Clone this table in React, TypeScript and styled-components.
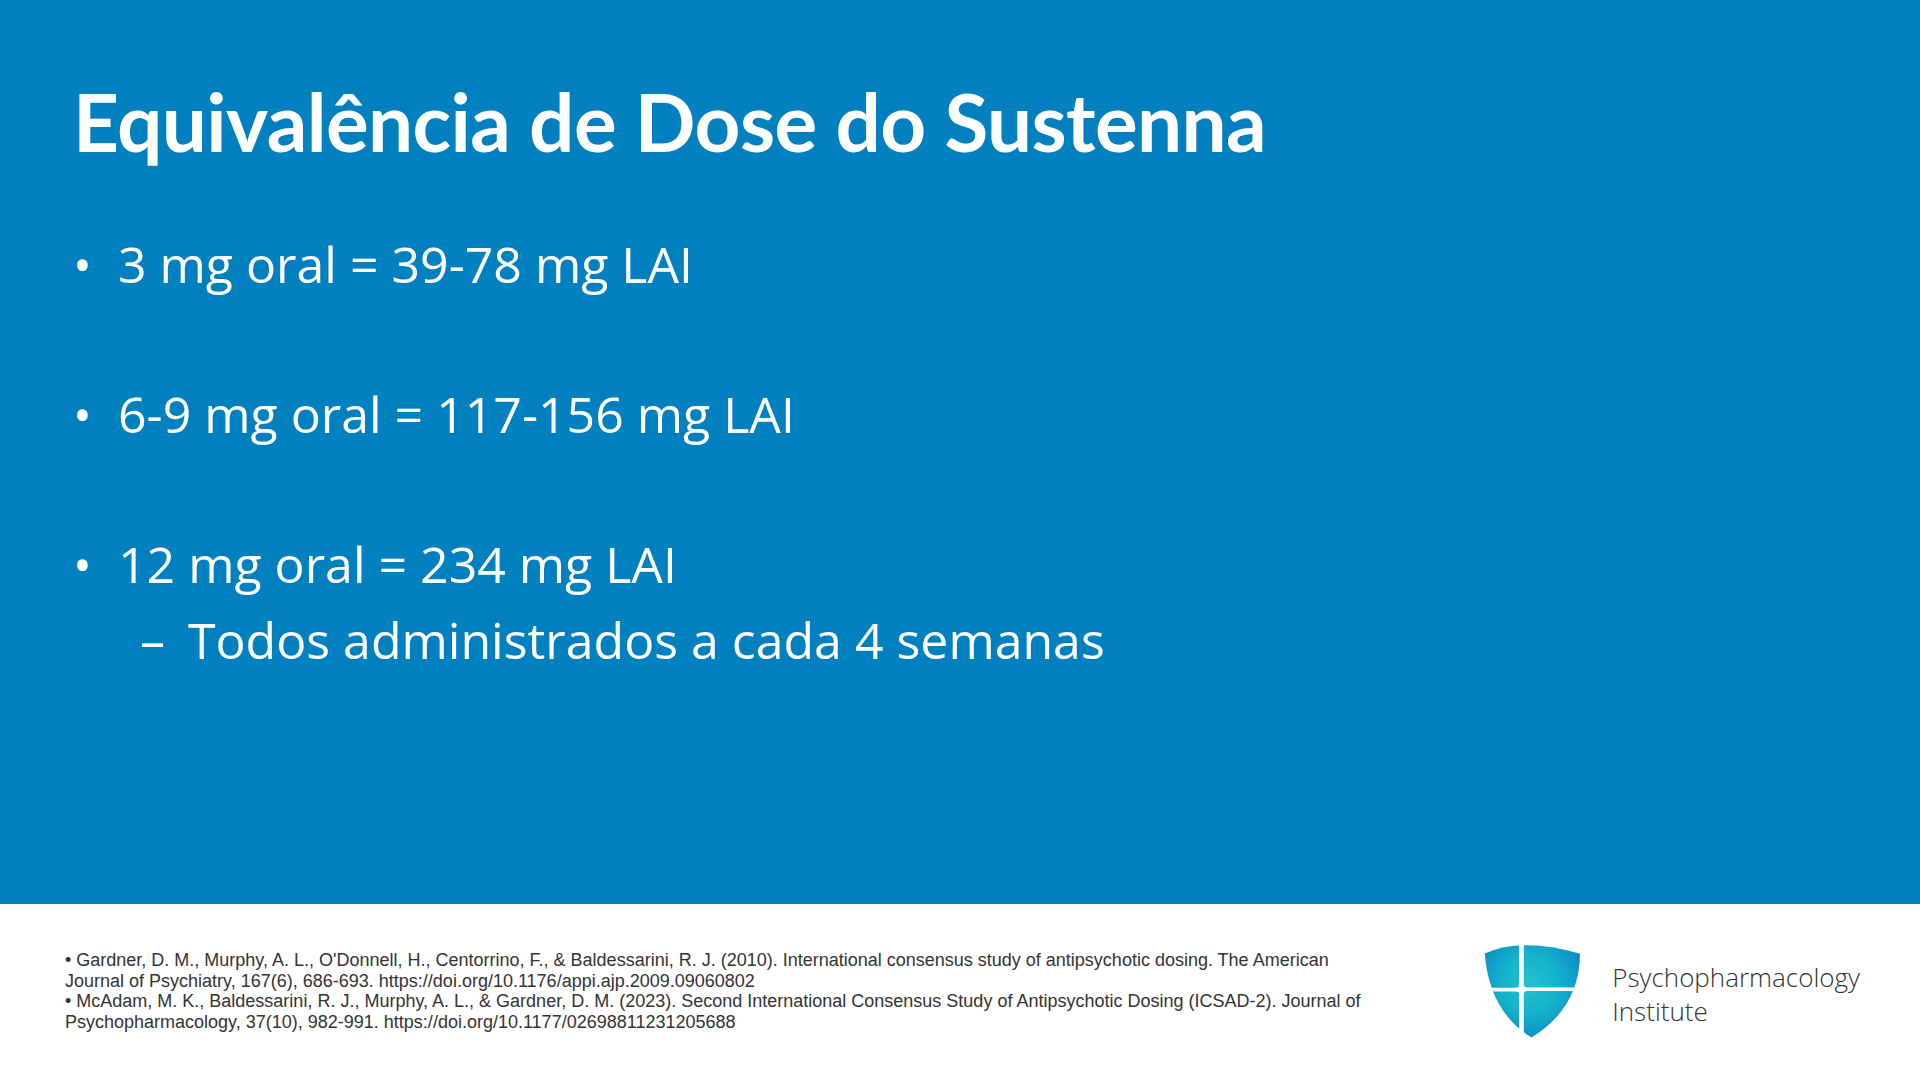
import React from "react";
import styled, { createGlobalStyle } from "styled-components";

const GlobalStyle = createGlobalStyle`
  html, body {
    margin: 0;
    padding: 0;
    background: #ffffff;
  }
  body {
    width: 1920px;
    height: 1080px;
    overflow: hidden;
  }
  * {
    box-sizing: border-box;
  }
`;

const Slide = styled.div`
  width: 1920px;
  height: 1080px;
  display: flex;
  flex-direction: column;
`;

const Main = styled.main`
  height: 904px;
  background: #0180c0;
  padding: 81px 0 0 73px;
  display: flex;
  flex-direction: column;
`;

const Title = styled.h1`
  margin: 0;
  font-family: Lato, "Open Sans", sans-serif;
  font-weight: 700;
  font-size: 80px;
  line-height: 80px;
  letter-spacing: -0.6px;
  color: #ffffff;
`;

const List = styled.ul`
  list-style: none;
  margin: 78px 0 0 0;
  padding: 0;
  display: flex;
  flex-direction: column;
  gap: 100px;
`;

const SubList = styled.ul`
  list-style: none;
  margin: 26px 0 0 0;
  padding: 0;
`;

const Item = styled.li`
  display: flex;
  flex-direction: column;
`;

const Row = styled.div<{ $indent?: number }>`
  display: flex;
  align-items: baseline;
  margin-left: ${(p) => p.$indent ?? 0}px;
  font-family: "Open Sans", sans-serif;
  font-size: 50px;
  line-height: 50px;
  color: #ffffff;
  white-space: nowrap;
`;

const Marker = styled.span<{ $width: number }>`
  flex: 0 0 ${(p) => p.$width}px;
`;

const Footer = styled.footer`
  flex: 1;
  background: #ffffff;
  display: flex;
  align-items: center;
  justify-content: space-between;
  padding: 0 60px 2px 65px;
`;

const Refs = styled.div`
  width: 1312px;
  font-family: "Liberation Sans", Arial, sans-serif;
  font-size: 18px;
  line-height: 20.5px;
  color: #333333;
`;

const RefLine = styled.p`
  margin: 0;
`;

const Logo = styled.div`
  display: flex;
  align-items: center;
  gap: 31px;
`;

const LogoText = styled.div`
  margin-top: 5px;
  font-family: "Open Sans", sans-serif;
  font-weight: 300;
  font-size: 26px;
  line-height: 34px;
  color: #333333;
`;

const LogoLine = styled.span`
  display: block;
`;

const Shield: React.FC = () => (
  <svg width="97" height="94" viewBox="10 6 97 94" aria-hidden="true">
    <defs>
      <radialGradient id="shieldGrad" gradientUnits="userSpaceOnUse" cx="56" cy="46" r="62">
        <stop offset="0" stopColor="#22c3cf" />
        <stop offset="0.45" stopColor="#16b3cd" />
        <stop offset="1" stopColor="#0a84c2" />
      </radialGradient>
      <clipPath id="shieldClip">
        <path d="M10.8,15.5 Q48,-1 106,15.8 C105.5,50 92,78 57.5,99.5 C26,80 13.5,50 10.8,15.5 Z" />
      </clipPath>
    </defs>
    <g clipPath="url(#shieldClip)" fill="url(#shieldGrad)">
      <rect x="-50" y="-50" width="95.2" height="99.8" rx="3" />
      <rect x="49.8" y="-50" width="110" height="99.4" rx="3" />
      <rect x="-50" y="53.6" width="95.2" height="110" rx="3" />
      <rect x="49.8" y="53" width="110" height="110" rx="3" />
    </g>
  </svg>
);

const bullets = [
  "3 mg oral = 39-78 mg LAI",
  "6-9 mg oral = 117-156 mg LAI",
];

export default function App() {
  return (
    <>
      <GlobalStyle />
      <Slide>
        <Main>
          <Title>Equivalência de Dose do Sustenna</Title>
          <List>
            {bullets.map((b) => (
              <Item key={b}>
                <Row>
                  <Marker $width={45}>•</Marker>
                  <span>{b}</span>
                </Row>
              </Item>
            ))}
            <Item>
              <Row>
                <Marker $width={45}>•</Marker>
                <span>12 mg oral = 234 mg LAI</span>
              </Row>
              <SubList>
                <li>
                  <Row $indent={67}>
                    <Marker $width={48}>–</Marker>
                    <span>Todos administrados a cada 4 semanas</span>
                  </Row>
                </li>
              </SubList>
            </Item>
          </List>
        </Main>
        <Footer>
          <Refs>
            <RefLine>
              • Gardner, D. M., Murphy, A. L., O'Donnell, H., Centorrino, F., &amp; Baldessarini, R. J. (2010). International consensus study of antipsychotic dosing. The American Journal of Psychiatry, 167(6), 686-693. https://doi.org/10.1176/appi.ajp.2009.09060802
            </RefLine>
            <RefLine>
              • McAdam, M. K., Baldessarini, R. J., Murphy, A. L., &amp; Gardner, D. M. (2023). Second International Consensus Study of Antipsychotic Dosing (ICSAD-2). Journal of Psychopharmacology, 37(10), 982-991. https://doi.org/10.1177/02698811231205688
            </RefLine>
          </Refs>
          <Logo>
            <Shield />
            <LogoText>
              <LogoLine>Psychopharmacology</LogoLine>
              <LogoLine>Institute</LogoLine>
            </LogoText>
          </Logo>
        </Footer>
      </Slide>
    </>
  );
}
